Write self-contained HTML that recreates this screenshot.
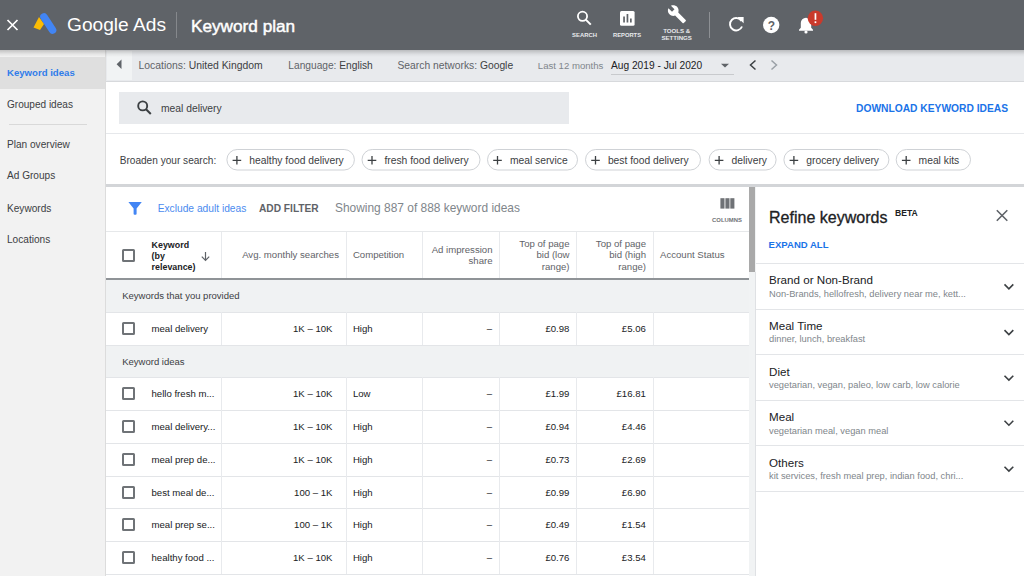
<!DOCTYPE html>
<html><head><meta charset="utf-8">
<style>
*{box-sizing:border-box;margin:0;padding:0}
html,body{width:1024px;height:576px;overflow:hidden;background:#fff;font-family:"Liberation Sans",sans-serif;position:relative}
.a{position:absolute}
.t{position:absolute;white-space:nowrap;line-height:1}
.cb{position:absolute;width:13px;height:13px;border:2px solid #6f7377;border-radius:1.5px;background:#fff}
svg text{font-family:"Liberation Sans",sans-serif}
</style></head><body>
<div class="a" style="left:0px;top:50px;width:106px;height:526px;background:#f2f2f2;"></div>
<div class="a" style="left:105px;top:50px;width:1px;height:526px;background:#dcdcdc;"></div>
<div class="a" style="left:0px;top:57px;width:105px;height:32px;background:#dfdfdf;"></div>
<div class="a" style="left:106px;top:50px;width:918px;height:31px;background:#e8eaed;"></div>
<div class="a" style="left:106px;top:81px;width:918px;height:1px;background:#d7d9dc;"></div>
<div class="a" style="left:107px;top:51px;width:25px;height:29px;background:#f1f3f4;"></div>
<div class="a" style="left:106px;top:82px;width:918px;height:102px;background:#fff;"></div>
<div class="a" style="left:106px;top:133px;width:918px;height:1px;background:#e6e8eb;"></div>
<div class="a" style="left:106px;top:184px;width:918px;height:3px;background:#d3d5d8;"></div>
<div class="a" style="left:106px;top:187px;width:643px;height:389px;background:#fff;"></div>
<div class="a" style="left:755px;top:187px;width:269px;height:389px;background:#fff;"></div>
<div class="a" style="left:749px;top:187px;width:7px;height:389px;background:#f1f3f4;"></div>
<div class="a" style="left:755px;top:272px;width:1px;height:304px;background:#dfe1e4;"></div>
<div class="a" style="left:749px;top:187px;width:6px;height:85px;background:#a9a9a9;"></div>
<div class="a" style="left:0px;top:0px;width:1024px;height:50px;background:#5f6368;z-index:3"></div>
<div class="a" style="left:0;top:50px;width:1024px;height:7px;background:linear-gradient(rgba(0,0,0,.2),rgba(0,0,0,.05) 60%,rgba(0,0,0,0));z-index:3"></div>
<svg class="a" style="left:0;top:0;z-index:4" width="1024" height="50" viewBox="0 0 1024 50">
<path d="M7.5 20L17.5 30M17.5 20L7.5 30" stroke="#fff" stroke-width="1.7"/>
<path d="M39 17 L33.5 27.5 L40 30 L44 24 Z" fill="#fbbc04"/>
<line x1="44" y1="17" x2="52.5" y2="30" stroke="#4285f4" stroke-width="7.6" stroke-linecap="round"/>
<rect x="176" y="12" width="1" height="26" fill="#85888c"/>
<circle cx="582.5" cy="16.3" r="4.6" stroke="#fff" stroke-width="1.8" fill="none"/>
<path d="M585.8 19.6L590.8 24.6" stroke="#fff" stroke-width="2"/>
<rect x="620" y="11" width="14.6" height="14.8" rx="1.5" fill="#fff"/>
<rect x="623.2" y="16.5" width="1.7" height="6" fill="#5f6368"/>
<rect x="626.6" y="14" width="1.7" height="8.5" fill="#5f6368"/>
<rect x="630" y="18.5" width="1.7" height="4" fill="#5f6368"/>
<g transform="translate(667.1 4.4) scale(0.82)"><path d="M22.7 19l-9.1-9.1c.9-2.3.4-5-1.5-6.9-2-2-5-2.4-7.4-1.3L9 6 6 9 1.6 4.7C.4 7.1.9 10.1 2.9 12.1c1.9 1.9 4.6 2.4 6.9 1.5l9.1 9.1c.4.4 1 .4 1.4 0l2.3-2.3c.5-.4.5-1.1.1-1.4z" fill="#fff"/></g>
<rect x="709" y="12" width="1" height="26" fill="#8d9094"/>
<path d="M741.5 21 A6.2 6.2 0 1 0 742 26.5" stroke="#fff" stroke-width="1.9" fill="none"/>
<path d="M737.3 17 L743.6 17 L743.6 23.2 Z" fill="#fff"/>
<circle cx="771.2" cy="25" r="8.2" fill="#fff"/>
<text x="771.3" y="29.6" font-family="Liberation Sans" font-weight="bold" font-size="12" fill="#5f6368" text-anchor="middle">?</text>
<path d="M799 30.8 L813 30.8 L813 29.8 L811.2 27.8 L811.2 23 A5.2 5.2 0 0 0 800.8 23 L800.8 27.8 L799 29.8 Z" fill="#fff"/>
<circle cx="806" cy="32" r="1.6" fill="#fff"/>
<circle cx="815.4" cy="18.3" r="7.7" fill="#c93a2c"/>
<rect x="814.6" y="13.2" width="1.7" height="6.6" fill="#fff"/>
<rect x="814.6" y="21.3" width="1.7" height="1.8" fill="#fff"/>
</svg>
<div class="t" style="top:15.18px;font-size:19.15px;color:#fff;left:67.00px;z-index:4;">Google Ads</div>
<div class="t" style="top:18.14px;font-size:17.2px;color:#fff;left:191.00px;z-index:4;-webkit-text-stroke:0.45px #fff;">Keyword plan</div>
<div class="t" style="top:32.80px;font-size:5.9px;color:#e8eaed;font-weight:bold;left:584.50px;z-index:4;transform:translateX(-50%);">SEARCH</div>
<div class="t" style="top:32.85px;font-size:5.8px;color:#e8eaed;font-weight:bold;left:627.00px;z-index:4;transform:translateX(-50%);">REPORTS</div>
<div class="t" style="top:28.30px;font-size:6.1px;color:#e8eaed;font-weight:bold;left:676.70px;z-index:4;transform:translateX(-50%);">TOOLS &amp;</div>
<div class="t" style="top:35.30px;font-size:6.1px;color:#e8eaed;font-weight:bold;left:676.70px;z-index:4;transform:translateX(-50%);">SETTINGS</div>
<div class="t" style="top:67.58px;font-size:9.6px;color:#2f7cea;font-weight:bold;left:7.00px;">Keyword ideas</div>
<div class="t" style="top:100.25px;font-size:10.06px;color:#3c4043;left:7.00px;">Grouped ideas</div>
<div class="a" style="left:9px;top:124px;width:78px;height:1px;background:#d9d9d9;"></div>
<div class="t" style="top:139.53px;font-size:10.1px;color:#3c4043;left:7.00px;">Plan overview</div>
<div class="t" style="top:171.23px;font-size:10.1px;color:#3c4043;left:7.00px;">Ad Groups</div>
<div class="t" style="top:203.53px;font-size:10.1px;color:#3c4043;left:7.00px;">Keywords</div>
<div class="t" style="top:235.43px;font-size:10.1px;color:#3c4043;left:7.00px;">Locations</div>
<svg class="a" style="left:0;top:0" width="1024" height="82"><path d="M121.5 59.5 L116.6 64.3 L121.5 69 Z" fill="#5f6368"/><path d="M721 63.7 L729 63.7 L725 67.5 Z" fill="#5f6368"/><rect x="611" y="74" width="123" height="1" fill="#c8cacd"/><path d="M755.5 60.5 L750.5 65 L755.5 69.5" stroke="#3c4043" stroke-width="1.5" fill="none"/><path d="M771.5 60.5 L776.5 65 L771.5 69.5" stroke="#9aa0a6" stroke-width="1.5" fill="none"/></svg>
<div class="t" style="top:60.88px;font-size:10.4px;color:#3c4043;left:138.50px;"><span style="color:#5f6368">Locations:</span> United Kingdom</div>
<div class="t" style="top:60.98px;font-size:10.2px;color:#3c4043;left:288.30px;"><span style="color:#5f6368">Language:</span> English</div>
<div class="t" style="top:60.93px;font-size:10.3px;color:#3c4043;left:397.50px;"><span style="color:#5f6368">Search networks:</span> Google</div>
<div class="t" style="top:61.28px;font-size:9.6px;color:#80868b;left:537.80px;">Last 12 months</div>
<div class="t" style="top:60.98px;font-size:10.2px;color:#202124;left:611.00px;">Aug 2019 - Jul 2020</div>
<div class="a" style="left:119px;top:92px;width:450px;height:32px;background:#e8eaed;"></div>
<svg class="a" style="left:0;top:0" width="600" height="130"><circle cx="142.7" cy="105.9" r="4.5" stroke="#3c4043" stroke-width="1.9" fill="none"/><path d="M146 109.3 L150.8 113.9" stroke="#3c4043" stroke-width="2.1"/></svg>
<div class="t" style="top:104.13px;font-size:10.3px;color:#3c4043;left:161.00px;">meal delivery</div>
<div class="t" style="top:103.76px;font-size:10.25px;color:#1a73e8;font-weight:bold;left:856.00px;">DOWNLOAD KEYWORD IDEAS</div>
<div class="t" style="top:155.63px;font-size:10.1px;color:#3c4043;left:119.70px;">Broaden your search:</div>
<svg class="a" style="left:0;top:0" width="1024" height="190"><rect x="226.9" y="149.5" width="127.49999999999997" height="20.5" rx="10.25" fill="#fff" stroke="#cfd2d6" stroke-width="1"/><path d="M232.6 160.3 H241.20000000000002 M236.9 156 V164.6" stroke="#3c4043" stroke-width="1.3"/><rect x="362.0" y="149.5" width="118.0" height="20.5" rx="10.25" fill="#fff" stroke="#cfd2d6" stroke-width="1"/><path d="M367.7 160.3 H376.3 M372.0 156 V164.6" stroke="#3c4043" stroke-width="1.3"/><rect x="487.5" y="149.5" width="90" height="20.5" rx="10.25" fill="#fff" stroke="#cfd2d6" stroke-width="1"/><path d="M493.2 160.3 H501.8 M497.5 156 V164.6" stroke="#3c4043" stroke-width="1.3"/><rect x="585.5" y="149.5" width="115" height="20.5" rx="10.25" fill="#fff" stroke="#cfd2d6" stroke-width="1"/><path d="M591.2 160.3 H599.8 M595.5 156 V164.6" stroke="#3c4043" stroke-width="1.3"/><rect x="709.1" y="149.5" width="67.0" height="20.5" rx="10.25" fill="#fff" stroke="#cfd2d6" stroke-width="1"/><path d="M714.8000000000001 160.3 H723.4 M719.1 156 V164.6" stroke="#3c4043" stroke-width="1.3"/><rect x="783.9" y="149.5" width="105.0" height="20.5" rx="10.25" fill="#fff" stroke="#cfd2d6" stroke-width="1"/><path d="M789.6 160.3 H798.1999999999999 M793.9 156 V164.6" stroke="#3c4043" stroke-width="1.3"/><rect x="896.2" y="149.5" width="74.29999999999995" height="20.5" rx="10.25" fill="#fff" stroke="#cfd2d6" stroke-width="1"/><path d="M901.9000000000001 160.3 H910.5 M906.2 156 V164.6" stroke="#3c4043" stroke-width="1.3"/></svg>
<div class="t" style="top:156.03px;font-size:10.3px;color:#3c4043;left:249.30px;">healthy food delivery</div>
<div class="t" style="top:156.03px;font-size:10.3px;color:#3c4043;left:384.40px;">fresh food delivery</div>
<div class="t" style="top:156.03px;font-size:10.3px;color:#3c4043;left:509.90px;">meal service</div>
<div class="t" style="top:156.03px;font-size:10.3px;color:#3c4043;left:607.90px;">best food delivery</div>
<div class="t" style="top:156.03px;font-size:10.3px;color:#3c4043;left:731.50px;">delivery</div>
<div class="t" style="top:156.03px;font-size:10.3px;color:#3c4043;left:806.30px;">grocery delivery</div>
<div class="t" style="top:156.03px;font-size:10.3px;color:#3c4043;left:918.60px;">meal kits</div>
<svg class="a" style="left:0;top:0" width="760" height="232"><path d="M128.4 202 H141.8 L136.6 208.6 V213.8 Q136.6 214.8 135.6 214.8 H134.6 Q133.6 214.8 133.6 213.8 V208.6 Z" fill="#4285f4"/><rect x="720.4" y="198.2" width="4.1" height="10.4" fill="#6f7276"/><rect x="725.4" y="198.2" width="4.1" height="10.4" fill="#6f7276"/><rect x="730.3" y="198.2" width="4.1" height="10.4" fill="#6f7276"/></svg>
<div class="t" style="top:203.57px;font-size:10.22px;color:#4b8bef;left:157.70px;">Exclude adult ideas</div>
<div class="t" style="top:203.69px;font-size:10.19px;color:#5f6368;font-weight:bold;left:259.00px;">ADD FILTER</div>
<div class="t" style="top:202.73px;font-size:11.93px;color:#80868b;left:335.00px;">Showing 887 of 888 keyword ideas</div>
<div class="t" style="top:217.70px;font-size:5.9px;color:#6f7276;font-weight:bold;left:727.00px;transform:translateX(-50%);">COLUMNS</div>
<div class="a" style="left:106px;top:231px;width:643px;height:1px;background:#e6e8ea;"></div>
<div class="a" style="left:106px;top:278px;width:643px;height:2px;background:#8f9397;"></div>
<div class="a" style="left:106px;top:280px;width:643px;height:32px;background:#f0f2f3;"></div>
<div class="a" style="left:106px;top:345px;width:643px;height:32px;background:#f0f2f3;"></div>
<div class="a" style="left:106px;top:312px;width:643px;height:1px;background:#e3e5e8;"></div>
<div class="a" style="left:106px;top:345px;width:643px;height:1px;background:#e3e5e8;"></div>
<div class="a" style="left:106px;top:377px;width:643px;height:1px;background:#e3e5e8;"></div>
<div class="a" style="left:106px;top:410px;width:643px;height:1px;background:#e3e5e8;"></div>
<div class="a" style="left:106px;top:443px;width:643px;height:1px;background:#e3e5e8;"></div>
<div class="a" style="left:106px;top:476px;width:643px;height:1px;background:#e3e5e8;"></div>
<div class="a" style="left:106px;top:508px;width:643px;height:1px;background:#e3e5e8;"></div>
<div class="a" style="left:106px;top:541px;width:643px;height:1px;background:#e3e5e8;"></div>
<div class="a" style="left:106px;top:574px;width:643px;height:1px;background:#e3e5e8;"></div>
<div class="a" style="left:221px;top:232px;width:1px;height:46px;background:#e8eaed;"></div>
<div class="a" style="left:346px;top:232px;width:1px;height:46px;background:#e8eaed;"></div>
<div class="a" style="left:422px;top:232px;width:1px;height:46px;background:#e8eaed;"></div>
<div class="a" style="left:499px;top:232px;width:1px;height:46px;background:#e8eaed;"></div>
<div class="a" style="left:576px;top:232px;width:1px;height:46px;background:#e8eaed;"></div>
<div class="a" style="left:653px;top:232px;width:1px;height:46px;background:#e8eaed;"></div>
<div class="a" style="left:221px;top:312px;width:1px;height:33px;background:#e8eaed;"></div>
<div class="a" style="left:346px;top:312px;width:1px;height:33px;background:#e8eaed;"></div>
<div class="a" style="left:422px;top:312px;width:1px;height:33px;background:#e8eaed;"></div>
<div class="a" style="left:499px;top:312px;width:1px;height:33px;background:#e8eaed;"></div>
<div class="a" style="left:576px;top:312px;width:1px;height:33px;background:#e8eaed;"></div>
<div class="a" style="left:653px;top:312px;width:1px;height:33px;background:#e8eaed;"></div>
<div class="a" style="left:221px;top:377px;width:1px;height:33px;background:#e8eaed;"></div>
<div class="a" style="left:346px;top:377px;width:1px;height:33px;background:#e8eaed;"></div>
<div class="a" style="left:422px;top:377px;width:1px;height:33px;background:#e8eaed;"></div>
<div class="a" style="left:499px;top:377px;width:1px;height:33px;background:#e8eaed;"></div>
<div class="a" style="left:576px;top:377px;width:1px;height:33px;background:#e8eaed;"></div>
<div class="a" style="left:653px;top:377px;width:1px;height:33px;background:#e8eaed;"></div>
<div class="a" style="left:221px;top:410px;width:1px;height:33px;background:#e8eaed;"></div>
<div class="a" style="left:346px;top:410px;width:1px;height:33px;background:#e8eaed;"></div>
<div class="a" style="left:422px;top:410px;width:1px;height:33px;background:#e8eaed;"></div>
<div class="a" style="left:499px;top:410px;width:1px;height:33px;background:#e8eaed;"></div>
<div class="a" style="left:576px;top:410px;width:1px;height:33px;background:#e8eaed;"></div>
<div class="a" style="left:653px;top:410px;width:1px;height:33px;background:#e8eaed;"></div>
<div class="a" style="left:221px;top:443px;width:1px;height:33px;background:#e8eaed;"></div>
<div class="a" style="left:346px;top:443px;width:1px;height:33px;background:#e8eaed;"></div>
<div class="a" style="left:422px;top:443px;width:1px;height:33px;background:#e8eaed;"></div>
<div class="a" style="left:499px;top:443px;width:1px;height:33px;background:#e8eaed;"></div>
<div class="a" style="left:576px;top:443px;width:1px;height:33px;background:#e8eaed;"></div>
<div class="a" style="left:653px;top:443px;width:1px;height:33px;background:#e8eaed;"></div>
<div class="a" style="left:221px;top:476px;width:1px;height:32px;background:#e8eaed;"></div>
<div class="a" style="left:346px;top:476px;width:1px;height:32px;background:#e8eaed;"></div>
<div class="a" style="left:422px;top:476px;width:1px;height:32px;background:#e8eaed;"></div>
<div class="a" style="left:499px;top:476px;width:1px;height:32px;background:#e8eaed;"></div>
<div class="a" style="left:576px;top:476px;width:1px;height:32px;background:#e8eaed;"></div>
<div class="a" style="left:653px;top:476px;width:1px;height:32px;background:#e8eaed;"></div>
<div class="a" style="left:221px;top:508px;width:1px;height:33px;background:#e8eaed;"></div>
<div class="a" style="left:346px;top:508px;width:1px;height:33px;background:#e8eaed;"></div>
<div class="a" style="left:422px;top:508px;width:1px;height:33px;background:#e8eaed;"></div>
<div class="a" style="left:499px;top:508px;width:1px;height:33px;background:#e8eaed;"></div>
<div class="a" style="left:576px;top:508px;width:1px;height:33px;background:#e8eaed;"></div>
<div class="a" style="left:653px;top:508px;width:1px;height:33px;background:#e8eaed;"></div>
<div class="a" style="left:221px;top:541px;width:1px;height:33px;background:#e8eaed;"></div>
<div class="a" style="left:346px;top:541px;width:1px;height:33px;background:#e8eaed;"></div>
<div class="a" style="left:422px;top:541px;width:1px;height:33px;background:#e8eaed;"></div>
<div class="a" style="left:499px;top:541px;width:1px;height:33px;background:#e8eaed;"></div>
<div class="a" style="left:576px;top:541px;width:1px;height:33px;background:#e8eaed;"></div>
<div class="a" style="left:653px;top:541px;width:1px;height:33px;background:#e8eaed;"></div>
<div class="cb" style="left:122.3px;top:248.5px"></div>
<div class="t" style="top:240.62px;font-size:8.9px;color:#202124;font-weight:bold;left:151.60px;">Keyword</div>
<div class="t" style="top:251.62px;font-size:8.9px;color:#202124;font-weight:bold;left:151.60px;">(by</div>
<div class="t" style="top:262.62px;font-size:8.9px;color:#202124;font-weight:bold;left:151.60px;">relevance)</div>
<svg class="a" style="left:0;top:0" width="220" height="270"><path d="M205.5 252 V260.3 M201.8 256.6 L205.5 260.3 L209.2 256.6" stroke="#5f6368" stroke-width="1.2" fill="none"/></svg>
<div class="t" style="top:250.27px;font-size:9.61px;color:#5f6368;right:685.00px;">Avg. monthly searches</div>
<div class="t" style="top:250.28px;font-size:9.6px;color:#5f6368;left:352.90px;">Competition</div>
<div class="t" style="top:244.78px;font-size:9.6px;color:#5f6368;right:531.50px;">Ad impression</div>
<div class="t" style="top:255.98px;font-size:9.6px;color:#5f6368;right:531.50px;">share</div>
<div class="t" style="top:239.28px;font-size:9.6px;color:#5f6368;right:454.50px;">Top of page</div>
<div class="t" style="top:250.28px;font-size:9.6px;color:#5f6368;right:454.50px;">bid (low</div>
<div class="t" style="top:261.58px;font-size:9.6px;color:#5f6368;right:454.50px;">range)</div>
<div class="t" style="top:239.28px;font-size:9.6px;color:#5f6368;right:378.00px;">Top of page</div>
<div class="t" style="top:250.28px;font-size:9.6px;color:#5f6368;right:378.00px;">bid (high</div>
<div class="t" style="top:261.58px;font-size:9.6px;color:#5f6368;right:378.00px;">range)</div>
<div class="t" style="top:250.28px;font-size:9.6px;color:#5f6368;left:660.00px;">Account Status</div>
<div class="t" style="top:291.31px;font-size:9.53px;color:#3c4043;left:122.20px;">Keywords that you provided</div>
<div class="t" style="top:356.51px;font-size:9.53px;color:#3c4043;left:122.20px;">Keyword ideas</div>
<div class="cb" style="left:122.3px;top:322.4px"></div>
<div class="t" style="top:324.28px;font-size:9.6px;color:#202124;left:151.50px;">meal delivery</div>
<div class="t" style="top:324.28px;font-size:9.6px;color:#202124;right:691.50px;">1K – 10K</div>
<div class="t" style="top:324.28px;font-size:9.6px;color:#202124;left:352.90px;">High</div>
<div class="t" style="top:324.28px;font-size:9.6px;color:#202124;right:532.00px;">–</div>
<div class="t" style="top:324.28px;font-size:9.6px;color:#202124;right:454.60px;">£0.98</div>
<div class="t" style="top:324.28px;font-size:9.6px;color:#202124;right:378.20px;">£5.06</div>
<div class="cb" style="left:122.3px;top:387.4px"></div>
<div class="t" style="top:389.28px;font-size:9.6px;color:#202124;left:151.50px;">hello fresh m...</div>
<div class="t" style="top:389.28px;font-size:9.6px;color:#202124;right:691.50px;">1K – 10K</div>
<div class="t" style="top:389.28px;font-size:9.6px;color:#202124;left:352.90px;">Low</div>
<div class="t" style="top:389.28px;font-size:9.6px;color:#202124;right:532.00px;">–</div>
<div class="t" style="top:389.28px;font-size:9.6px;color:#202124;right:454.60px;">£1.99</div>
<div class="t" style="top:389.28px;font-size:9.6px;color:#202124;right:378.20px;">£16.81</div>
<div class="cb" style="left:122.3px;top:420.4px"></div>
<div class="t" style="top:422.28px;font-size:9.6px;color:#202124;left:151.50px;">meal delivery...</div>
<div class="t" style="top:422.28px;font-size:9.6px;color:#202124;right:691.50px;">1K – 10K</div>
<div class="t" style="top:422.28px;font-size:9.6px;color:#202124;left:352.90px;">High</div>
<div class="t" style="top:422.28px;font-size:9.6px;color:#202124;right:532.00px;">–</div>
<div class="t" style="top:422.28px;font-size:9.6px;color:#202124;right:454.60px;">£0.94</div>
<div class="t" style="top:422.28px;font-size:9.6px;color:#202124;right:378.20px;">£4.46</div>
<div class="cb" style="left:122.3px;top:453.4px"></div>
<div class="t" style="top:455.28px;font-size:9.6px;color:#202124;left:151.50px;">meal prep de...</div>
<div class="t" style="top:455.28px;font-size:9.6px;color:#202124;right:691.50px;">1K – 10K</div>
<div class="t" style="top:455.28px;font-size:9.6px;color:#202124;left:352.90px;">High</div>
<div class="t" style="top:455.28px;font-size:9.6px;color:#202124;right:532.00px;">–</div>
<div class="t" style="top:455.28px;font-size:9.6px;color:#202124;right:454.60px;">£0.73</div>
<div class="t" style="top:455.28px;font-size:9.6px;color:#202124;right:378.20px;">£2.69</div>
<div class="cb" style="left:122.3px;top:485.9px"></div>
<div class="t" style="top:487.78px;font-size:9.6px;color:#202124;left:151.50px;">best meal de...</div>
<div class="t" style="top:487.78px;font-size:9.6px;color:#202124;right:691.50px;">100 – 1K</div>
<div class="t" style="top:487.78px;font-size:9.6px;color:#202124;left:352.90px;">High</div>
<div class="t" style="top:487.78px;font-size:9.6px;color:#202124;right:532.00px;">–</div>
<div class="t" style="top:487.78px;font-size:9.6px;color:#202124;right:454.60px;">£0.99</div>
<div class="t" style="top:487.78px;font-size:9.6px;color:#202124;right:378.20px;">£6.90</div>
<div class="cb" style="left:122.3px;top:518.4px"></div>
<div class="t" style="top:520.28px;font-size:9.6px;color:#202124;left:151.50px;">meal prep se...</div>
<div class="t" style="top:520.28px;font-size:9.6px;color:#202124;right:691.50px;">100 – 1K</div>
<div class="t" style="top:520.28px;font-size:9.6px;color:#202124;left:352.90px;">High</div>
<div class="t" style="top:520.28px;font-size:9.6px;color:#202124;right:532.00px;">–</div>
<div class="t" style="top:520.28px;font-size:9.6px;color:#202124;right:454.60px;">£0.49</div>
<div class="t" style="top:520.28px;font-size:9.6px;color:#202124;right:378.20px;">£1.54</div>
<div class="cb" style="left:122.3px;top:551.4px"></div>
<div class="t" style="top:553.28px;font-size:9.6px;color:#202124;left:151.50px;">healthy food ...</div>
<div class="t" style="top:553.28px;font-size:9.6px;color:#202124;right:691.50px;">1K – 10K</div>
<div class="t" style="top:553.28px;font-size:9.6px;color:#202124;left:352.90px;">High</div>
<div class="t" style="top:553.28px;font-size:9.6px;color:#202124;right:532.00px;">–</div>
<div class="t" style="top:553.28px;font-size:9.6px;color:#202124;right:454.60px;">£0.76</div>
<div class="t" style="top:553.28px;font-size:9.6px;color:#202124;right:378.20px;">£3.54</div>
<div class="t" style="top:209.31px;font-size:16.03px;color:#202124;left:769.00px;-webkit-text-stroke:0.3px #202124;">Refine keywords</div>
<div class="t" style="top:209.47px;font-size:8.6px;color:#202124;font-weight:bold;left:895.00px;">BETA</div>
<svg class="a" style="left:0;top:0" width="1024" height="576"><path d="M996.8 210.3 L1007.3 220.8 M1007.3 210.3 L996.8 220.8" stroke="#5f6368" stroke-width="1.6"/>
<path d="M1004.5 284.4 L1008.9 288.8 L1013.3 284.4" stroke="#3c4043" stroke-width="1.6" fill="none"/><path d="M1004.5 330.1 L1008.9 334.5 L1013.3 330.1" stroke="#3c4043" stroke-width="1.6" fill="none"/><path d="M1004.5 375.7 L1008.9 380.1 L1013.3 375.7" stroke="#3c4043" stroke-width="1.6" fill="none"/><path d="M1004.5 420.8 L1008.9 425.2 L1013.3 420.8" stroke="#3c4043" stroke-width="1.6" fill="none"/><path d="M1004.5 466.7 L1008.9 471.1 L1013.3 466.7" stroke="#3c4043" stroke-width="1.6" fill="none"/></svg>
<div class="a" style="left:756px;top:263px;width:268px;height:1px;background:#e3e5e8;"></div>
<div class="a" style="left:756px;top:309px;width:268px;height:1px;background:#e3e5e8;"></div>
<div class="a" style="left:756px;top:354px;width:268px;height:1px;background:#e3e5e8;"></div>
<div class="a" style="left:756px;top:400px;width:268px;height:1px;background:#e3e5e8;"></div>
<div class="a" style="left:756px;top:445px;width:268px;height:1px;background:#e3e5e8;"></div>
<div class="a" style="left:756px;top:491px;width:268px;height:1px;background:#e3e5e8;"></div>
<div class="t" style="top:239.60px;font-size:9.56px;color:#1a73e8;font-weight:bold;left:768.60px;">EXPAND ALL</div>
<div class="t" style="top:274.38px;font-size:11.62px;color:#202124;left:769.00px;">Brand or Non-Brand</div>
<div class="t" style="top:289.62px;font-size:9.3px;color:#80868b;left:769.00px;">Non-Brands, hellofresh, delivery near me, kett...</div>
<div class="t" style="top:320.18px;font-size:11.62px;color:#202124;left:769.00px;">Meal Time</div>
<div class="t" style="top:335.42px;font-size:9.3px;color:#80868b;left:769.00px;">dinner, lunch, breakfast</div>
<div class="t" style="top:365.88px;font-size:11.62px;color:#202124;left:769.00px;">Diet</div>
<div class="t" style="top:381.12px;font-size:9.3px;color:#80868b;left:769.00px;">vegetarian, vegan, paleo, low carb, low calorie</div>
<div class="t" style="top:411.48px;font-size:11.62px;color:#202124;left:769.00px;">Meal</div>
<div class="t" style="top:426.72px;font-size:9.3px;color:#80868b;left:769.00px;">vegetarian meal, vegan meal</div>
<div class="t" style="top:456.58px;font-size:11.62px;color:#202124;left:769.00px;">Others</div>
<div class="t" style="top:471.82px;font-size:9.3px;color:#80868b;left:769.00px;">kit services, fresh meal prep, indian food, chri...</div>
</body></html>
